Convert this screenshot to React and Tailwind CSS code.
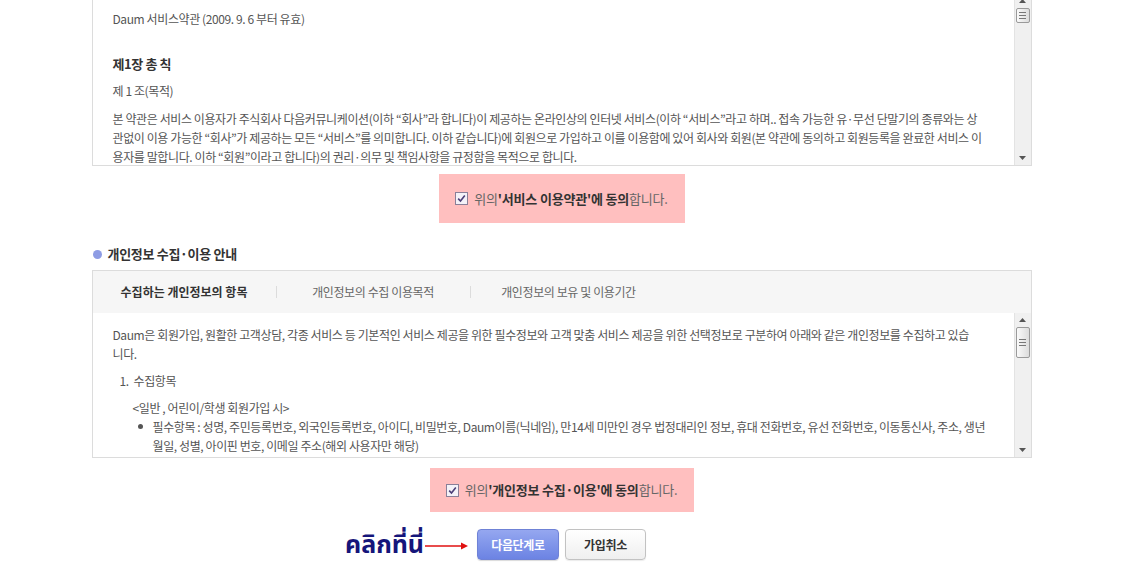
import React from 'react';

const kr = { fontFamily: '"Noto Sans CJK KR", "Noto Sans", sans-serif' };

function CheckBox() {
  return (
    <span className="inline-flex w-[13px] h-[13px] items-center justify-center border border-[#8a7f98] bg-[#f4f2f8] shrink-0">
      <svg width="9" height="9" viewBox="0 0 9 9">
        <path d="M1.2 4.6 L3.5 7 L7.8 1.6" fill="none" stroke="#4b3f78" strokeWidth="1.6" />
      </svg>
    </span>
  );
}

function Arrow({ down }) {
  return (
    <div className="h-[14px] flex items-center justify-center">
      <svg width="7" height="4" viewBox="0 0 7 4">
        <path d={down ? 'M0 0 L7 0 L3.5 4 Z' : 'M0 4 L7 4 L3.5 0 Z'} fill="#555" />
      </svg>
    </div>
  );
}

function Thumb({ h }) {
  return (
    <div
      className="mx-[1px] border border-[#9a9a9a] rounded-[2px] bg-gradient-to-r from-[#fafafa] to-[#dcdcdc] flex flex-col items-center justify-center gap-[2px]"
      style={{ height: h }}
    >
      <span className="w-[7px] h-px bg-[#777]" />
      <span className="w-[7px] h-px bg-[#777]" />
      <span className="w-[7px] h-px bg-[#777]" />
    </div>
  );
}

function Scrollbar({ thumb, gapTop }) {
  return (
    <div className="w-[17px] shrink-0 bg-[#f0f0f0] border-l border-[#e3e3e3] flex flex-col">
      <Arrow />
      <div style={{ height: gapTop }} />
      <Thumb h={thumb} />
      <div className="flex-1" />
      <Arrow down />
    </div>
  );
}

function Agree({ children, w, h }) {
  return (
    <div className={`mx-auto bg-[#ffbfbf] flex items-center justify-center gap-[6px] ${w} ${h}`}>
      <CheckBox />
      <span className="text-[13px] text-[#666] tracking-[-0.2px]">
        위의<b className="text-[#333]">{children}에 동의</b>합니다.
      </span>
    </div>
  );
}

export default function App() {
  return (
    <div className="min-h-screen bg-white overflow-hidden" style={kr}>
      <div className="w-[940px] mx-auto">
        {/* terms box */}
        <div className="-mt-[7px] h-[173px] border border-[#dcdcdc] flex">
          <div className="flex-1 overflow-hidden pl-[20px] pt-[15px] text-[12px] leading-[19px] text-[#555] tracking-[-0.4px] whitespace-nowrap">
            <p>Daum 서비스약관 (2009. 9. 6 부터 유효)</p>
            <p className="mt-[26px] font-bold text-[#333] text-[13px]">제1장 총 칙</p>
            <p className="mt-[8px]">제 1 조(목적)</p>
            <div className="mt-[9px]">
              <p>본 약관은 서비스 이용자가 주식회사 다음커뮤니케이션(이하 “회사”라 합니다)이 제공하는 온라인상의 인터넷 서비스(이하 “서비스”라고 하며.. 접속 가능한 유·무선 단말기의 종류와는 상</p>
              <p>관없이 이용 가능한 “회사”가 제공하는 모든 “서비스”를 의미합니다. 이하 같습니다)에 회원으로 가입하고 이를 이용함에 있어 회사와 회원(본 약관에 동의하고 회원등록을 완료한 서비스 이</p>
              <p>용자를 말합니다. 이하 “회원”이라고 합니다)의 권리·의무 및 책임사항을 규정함을 목적으로 합니다.</p>
            </div>
          </div>
          <Scrollbar thumb={15} gapTop={0} />
        </div>

        <div className="mt-[8px]">
          <Agree w="w-[246px]" h="h-[49px]">'서비스 이용약관'</Agree>
        </div>

        {/* privacy heading */}
        <div className="mt-[23px] flex items-center h-[16px]">
          <span className="w-[9px] h-[9px] rounded-full bg-[#8e9ce4] ml-[1px]" />
          <span className="ml-[6px] text-[13px] font-bold text-[#333] tracking-[-0.3px]">개인정보 수집·이용 안내</span>
        </div>

        {/* privacy box */}
        <div className="mt-[8px] h-[188px] border border-[#dcdcdc] flex flex-col">
          <div className="h-[42px] bg-[#f6f6f6] flex items-center text-[12px] tracking-[-0.4px] shrink-0">
            <div className="w-[183px] text-center font-bold text-[#333] tracking-[0px]">수집하는 개인정보의 항목</div>
            <span className="w-px h-[12px] bg-[#dcdcdc]" />
            <div className="w-[193px] text-center text-[#666]">개인정보의 수집 이용목적</div>
            <span className="w-px h-[12px] bg-[#dcdcdc]" />
            <div className="w-[196px] text-center text-[#666]">개인정보의 보유 및 이용기간</div>
          </div>
          <div className="flex-1 flex min-h-0">
            <div className="flex-1 overflow-hidden pl-[20px] pt-[12px] text-[12px] leading-[19px] text-[#555] tracking-[-0.4px] whitespace-nowrap">
              <p>Daum은 회원가입, 원활한 고객상담, 각종 서비스 등 기본적인 서비스 제공을 위한 필수정보와 고객 맞춤 서비스 제공을 위한 선택정보로 구분하여 아래와 같은 개인정보를 수집하고 있습</p>
              <p>니다.</p>
              <div className="mt-[8px] flex">
                <span className="w-[14px] ml-[7px]">1.</span>
                <span>수집항목</span>
              </div>
              <p className="mt-[9px] ml-[20px] leading-[18px]">&lt;일반 , 어린이/학생 회원가입 시&gt;</p>
              <div className="ml-[25px] flex">
                <span className="w-[15px] flex items-start pt-[7px]">
                  <span className="w-[5px] h-[5px] rounded-full bg-[#555]" />
                </span>
                <div>
                  <p>필수항목 : 성명, 주민등록번호, 외국인등록번호, 아이디, 비밀번호, Daum이름(닉네임), 만14세 미만인 경우 법정대리인 정보, 휴대 전화번호, 유선 전화번호, 이동통신사, 주소, 생년</p>
                  <p>월일, 성별, 아이핀 번호, 이메일 주소(해외 사용자만 해당)</p>
                </div>
              </div>
            </div>
            <Scrollbar thumb={31} gapTop={-3} />
          </div>
        </div>

        <div className="mt-[10px]">
          <Agree w="w-[264px]" h="h-[44px]">'개인정보 수집·이용'</Agree>
        </div>

        {/* buttons */}
        <div className="mt-[17px] flex justify-center">
          <div className="relative flex gap-[6px]">
            <div className="absolute right-full top-[2px] mr-[8px] flex items-center">
              <span className="text-[25px] font-bold text-[#15157a] leading-[29px] whitespace-nowrap" style={{ fontFamily: '"Noto Sans Thai", "DejaVu Sans", sans-serif' }}>
                คลิกที่นี่
              </span>
              <svg width="44" height="8" viewBox="0 0 44 8" className="ml-[1px]">
                <line x1="0" y1="4" x2="38" y2="4" stroke="#e01010" strokeWidth="1.6" />
                <path d="M36 0.5 L43 4 L36 7.5 Z" fill="#e01010" />
              </svg>
            </div>
            <button className="w-[82px] h-[31px] rounded-[4px] border border-[#6f82d6] bg-gradient-to-b from-[#95a7f0] to-[#6c83e3] text-white text-[12px] font-bold tracking-[-0.3px] shadow-[0_1px_1px_rgba(0,0,0,0.15)]">
              다음단계로
            </button>
            <button className="w-[81px] h-[31px] rounded-[4px] border border-[#c2c2c2] bg-gradient-to-b from-[#ffffff] to-[#efefef] text-[#333] text-[12px] font-bold tracking-[-0.3px] shadow-[0_1px_1px_rgba(0,0,0,0.08)]">
              가입취소
            </button>
          </div>
        </div>
      </div>
    </div>
  );
}
